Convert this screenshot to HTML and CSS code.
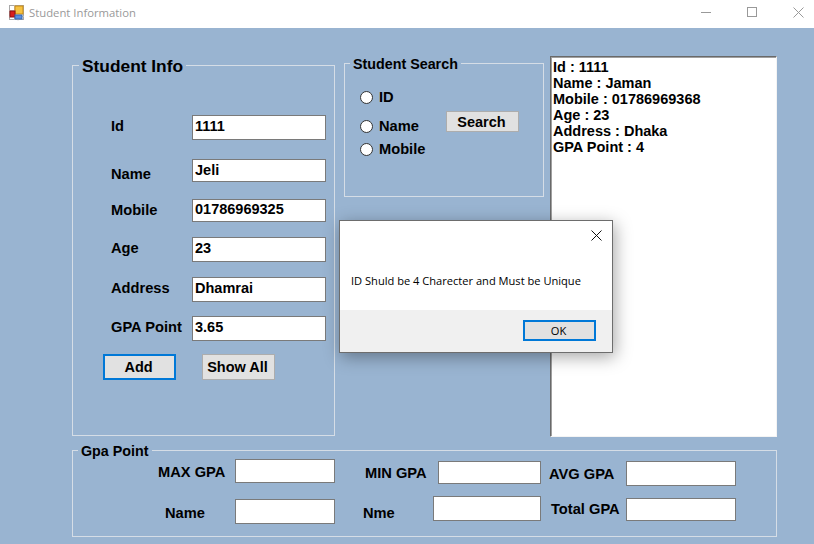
FILE: index.html
```html
<!DOCTYPE html>
<html lang="en">
<head>
    <meta charset="UTF-8">
    <meta name="viewport" content="width=device-width, initial-scale=1.0">
    <title>Student Information</title>
    <link rel="stylesheet" href="styles.css">
</head>
<body>
    <div class="window">
        <div class="titlebar">
            <svg class="app-icon" width="16" height="16" viewBox="0 0 16 16">
                <rect x="0.5" y="0.5" width="14" height="14" fill="#fff" stroke="#a8a8a8"/>
                <path d="M0 5.5h6M5.5 0v15M0 11.5h15M9 11.5v4" stroke="#c4c4c4" fill="none"/>
                <rect x="6" y="1" width="8" height="8" fill="#f5c242" stroke="#c98a12"/>
                <rect x="1" y="6" width="5" height="6" fill="#d81e1e" stroke="#8d1010"/>
                <rect x="6" y="10" width="7" height="4" fill="#5a8fe0" stroke="#3566b0"/>
            </svg>
            <span class="app-title">Student Information</span>
            <div class="window-controls">
                <svg width="11" height="11" viewBox="0 0 11 11"><path d="M0 5.5h10" stroke="#999" fill="none"/></svg>
                <svg width="11" height="11" viewBox="0 0 11 11"><rect x="0.5" y="0.5" width="9" height="9" stroke="#999" fill="none"/></svg>
                <svg width="11" height="11" viewBox="0 0 11 11"><path d="M0.5 0.5l10 10M10.5 0.5l-10 10" stroke="#999" fill="none"/></svg>
            </div>
        </div>

        <div class="form-area">
            <div class="top-row">
                <div class="group info-group">
                    <h2 class="legend legend-big">Student Info</h2>
                    <div class="field field-id"><label>Id</label><input class="tall" type="text" value="1111"></div>
                    <div class="field field-name"><label>Name</label><input class="short" type="text" value="Jeli"></div>
                    <div class="field field-mobile"><label>Mobile</label><input class="short" type="text" value="01786969325"></div>
                    <div class="field field-age"><label>Age</label><input class="tall" type="text" value="23"></div>
                    <div class="field field-address"><label>Address</label><input class="tall" type="text" value="Dhamrai"></div>
                    <div class="field field-gpa"><label>GPA Point</label><input class="tall" type="text" value="3.65"></div>
                    <div class="info-buttons">
                        <button type="button" class="focused">Add</button>
                        <button type="button">Show All</button>
                    </div>
                </div>

                <div class="group search-group">
                    <h2 class="legend">Student Search</h2>
                    <div class="search-body">
                        <div class="radios">
                            <label class="radio"><input type="radio" name="by">ID</label>
                            <label class="radio radio-name"><input type="radio" name="by">Name</label>
                            <label class="radio radio-mobile"><input type="radio" name="by">Mobile</label>
                        </div>
                        <button type="button" class="search-btn">Search</button>
                    </div>
                </div>

                <div class="result-list">
                    <p>Id : 1111</p>
                    <p>Name : Jaman</p>
                    <p>Mobile : 01786969368</p>
                    <p>Age : 23</p>
                    <p>Address : Dhaka</p>
                    <p>GPA Point : 4</p>
                </div>
            </div>

            <div class="group gpa-group">
                <h2 class="legend">Gpa Point</h2>
                <div class="gpa-body">
                    <div class="gpa-col col-max">
                        <div class="gpa-row"><label class="lbl-max">MAX GPA</label><input class="mid" type="text"></div>
                        <div class="gpa-row"><label class="lbl-name">Name</label><input class="tall" type="text"></div>
                    </div>
                    <div class="gpa-col col-min">
                        <div class="gpa-row"><label class="lbl-min">MIN GPA</label><input class="short" type="text"></div>
                        <div class="gpa-row"><label class="lbl-nme">Nme</label><input class="tall wide" type="text"></div>
                    </div>
                    <div class="gpa-col col-avg">
                        <div class="gpa-row"><label>AVG GPA</label><input class="tall" type="text"></div>
                        <div class="gpa-row"><label class="lbl-total">Total GPA</label><input class="short" type="text"></div>
                    </div>
                </div>
            </div>
        </div>

        <div class="dialog">
            <div class="dialog-top">
                <svg width="11" height="11" viewBox="0 0 11 11"><path d="M0.5 0.5l10 10M10.5 0.5l-10 10" stroke="#111" fill="none"/></svg>
            </div>
            <p class="dialog-msg">ID Shuld be 4 Charecter and Must be Unique</p>
            <div class="dialog-foot">
                <button type="button" class="focused ok-btn">OK</button>
            </div>
        </div>
    </div>
</body>
</html>
```

FILE: styles.css
```css
body {
    margin: 0;
    overflow: hidden;
    font-family: "Liberation Sans", Arial, sans-serif;
    font-size: 14.5px;
    font-weight: bold;
    color: #000;
}

.window {
    position: relative;
    width: 814px;
    height: 544px;
    background-color: #99b4d1;
    overflow: hidden;
}

/* title bar */
.titlebar {
    display: flex;
    align-items: center;
    height: 28px;
    padding-left: 9px;
    background-color: #fff;
    box-sizing: border-box;
}
.app-icon {
    margin-top: -3px;
}
.app-title {
    margin: -3px 0 0 4px;
    font-family: "Open Sans", sans-serif;
    font-size: 11.3px;
    font-weight: normal;
    color: #999;
}
.window-controls {
    display: flex;
    gap: 35px;
    margin: -3px 0 0 auto;
    padding-right: 10px;
}

/* form */
.form-area {
    padding: 28px 0 0 72px;
}
.top-row {
    display: flex;
    align-items: flex-start;
}
.group {
    border: 1px solid #d5dde6;
    box-sizing: border-box;
}
.legend {
    width: fit-content;
    height: 17px;
    margin: -9px 0 0 5px;
    padding: 0 3px;
    font-size: 14.3px;
    line-height: 18px;
    background-color: #99b4d1;
}
.legend-big {
    height: 19px;
    margin-top: -10px;
    margin-left: 6px;
    font-size: 17.33px;
    line-height: 20px;
}

label {
    display: block;
    font-size: 14.67px;
}
input[type="text"] {
    box-sizing: border-box;
    margin: 0;
    padding: 0 0 3px 2px;
    border: 1px solid #7a7a7a;
    background-color: #fff;
    font: inherit;
    color: #000;
    outline: none;
}
.tall { height: 25px; }
.mid { height: 24px; }
.short { height: 23px; }

button {
    box-sizing: border-box;
    width: 73px;
    height: 26px;
    padding: 0 2px 0 0;
    border: 1px solid #adadad;
    background-color: #e1e1e1;
    font: inherit;
    color: #000;
}
button.focused {
    border: 2px solid #0078d7;
}

/* student info */
.info-group {
    width: 263px;
    height: 371px;
    margin-top: 9px;
}
.field {
    display: flex;
    align-items: center;
    margin-left: 38px;
}
.field label {
    width: 81px;
    margin-top: -3px;
}
.field input {
    width: 134px;
}
.field-id { margin-top: 40px; }
.field-name { margin-top: 19px; }
.field-name label { margin-top: 7px; }
.field-name input { padding-bottom: 2px; }
.field-mobile { margin-top: 17px; }
.field-mobile label { margin-top: -1px; }
.field-age { margin-top: 15px; }
.field-address { margin-top: 15px; }
.field-gpa { margin-top: 14px; }
.info-buttons {
    display: flex;
    gap: 26px;
    margin: 13px 0 0 30px;
}

/* search */
.search-group {
    width: 200px;
    height: 134px;
    margin: 7px 0 0 9px;
}
.search-body {
    display: flex;
    padding-left: 15px;
}
.radios {
    width: 86px;
    padding-top: 17px;
}
.radio {
    display: flex;
    align-items: center;
    gap: 6px;
    height: 16px;
}
.radio-name { margin-top: 13px; }
.radio-mobile { margin-top: 7px; }
.radio input {
    appearance: none;
    box-sizing: border-box;
    width: 13px;
    height: 13px;
    margin: 0;
    border: 1px solid #333;
    border-radius: 50%;
    background-color: #fff;
}
.search-btn {
    height: 21px;
    margin-top: 39px;
}

/* list box */
.result-list {
    box-sizing: border-box;
    width: 227px;
    height: 381px;
    margin-left: 6px;
    padding: 2px 0 0 2px;
    border: 1px solid #f4f4f4;
    border-top-color: #696969;
    border-left-color: #696969;
    box-shadow: inset 1px 1px 0 #a0a0a0;
    background-color: #fff;
}
.result-list p {
    margin: 0;
    line-height: 16px;
}

/* gpa */
.gpa-group {
    width: 705px;
    height: 87px;
    margin-top: 13px;
}
.gpa-body {
    display: flex;
    padding-left: 85px;
}
.gpa-col {
    display: flex;
    flex-direction: column;
}
.gpa-row {
    display: flex;
    align-items: center;
    justify-content: space-between;
}
.col-max {
    width: 177px;
    gap: 16px;
}
.col-max input { width: 100px; }
.col-min {
    width: 178px;
    gap: 12px;
    margin: 2px 0 0 28px;
}
.col-min input { width: 103px; }
.col-min input.wide { width: 108px; }
.col-avg {
    width: 187px;
    gap: 12px;
    margin: 2px 0 0 8px;
}
.col-avg input { width: 110px; }
.lbl-max { margin-top: 2px; }
.lbl-name { margin: 3px 0 0 7px; }
.lbl-min { margin-left: 2px; }
.lbl-nme { margin-top: 9px; }
.lbl-total { margin: -1px 0 0 2px; }

/* message box */
.dialog {
    position: absolute;
    left: 339px;
    top: 220px;
    display: flex;
    flex-direction: column;
    box-sizing: border-box;
    width: 274px;
    height: 133px;
    border: 1px solid #6d6d6d;
    background-color: #fff;
    box-shadow: 2px 4px 16px rgba(0, 0, 0, 0.35);
    font-family: "Open Sans", sans-serif;
    font-size: 11.1px;
    font-weight: normal;
}
.dialog-top {
    display: flex;
    justify-content: flex-end;
    padding: 9px 10px 0 0;
}
.dialog-msg {
    flex: 1;
    margin: 0;
    padding: 32px 0 0 11px;
    line-height: 16px;
    color: #000;
}
.dialog-foot {
    display: flex;
    justify-content: flex-end;
    height: 42px;
    padding: 10px 16px 0 0;
    box-sizing: border-box;
    background-color: #f0f0f0;
}
.ok-btn {
    height: 21px;
    font-weight: normal;
}
```
